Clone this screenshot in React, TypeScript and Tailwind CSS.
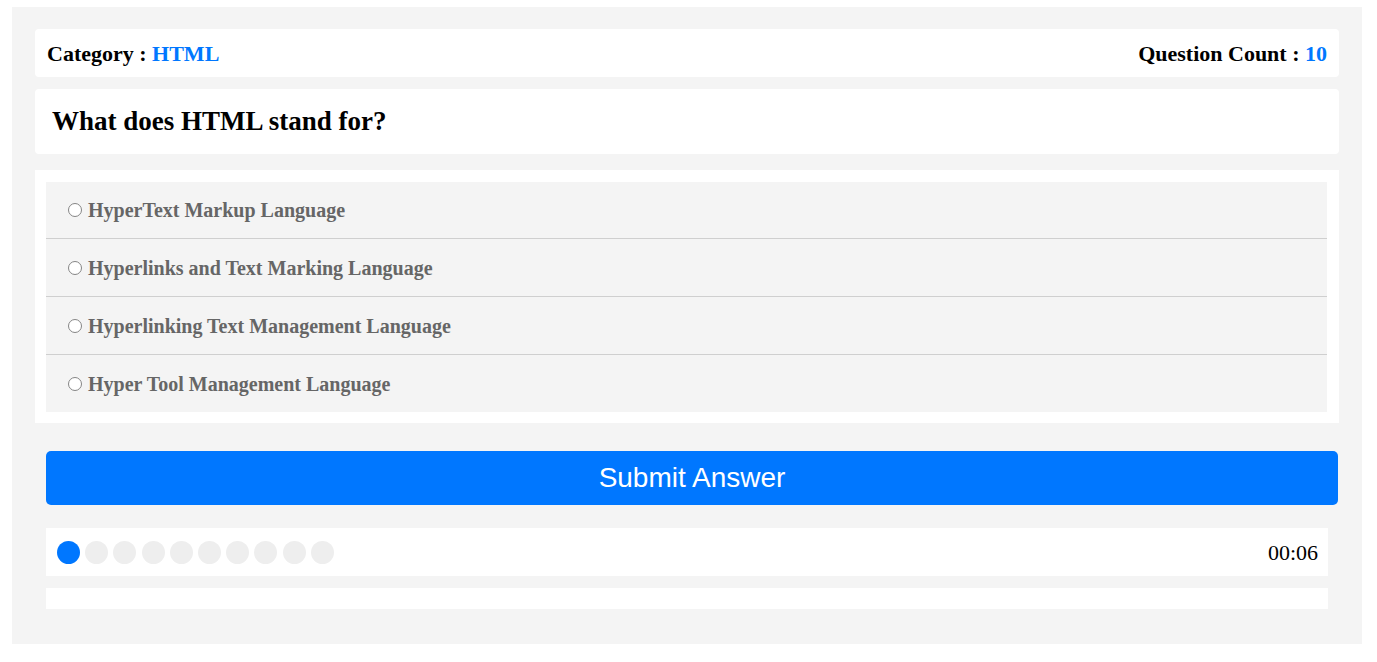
const options = [
  "HyperText Markup Language",
  "Hyperlinks and Text Marking Language",
  "Hyperlinking Text Management Language",
  "Hyper Tool Management Language",
];

const App = () => {
  const total = 10;
  const current = 0;

  return (
    <div className="min-h-[662px] bg-white pt-[7px] font-['Liberation_Serif',serif]">
      <div className="ml-[12px] w-[1350px] bg-[#f4f4f4] px-[23px] pt-[22px] pb-[35px]">
        <div className="flex h-[48px] items-center justify-between rounded bg-white px-3 text-[22px] font-bold text-black">
          <div>
            Category : <span className="text-[#0077ff]">HTML</span>
          </div>
          <div>
            Question Count : <span className="text-[#0077ff]">{total}</span>
          </div>
        </div>

        <div className="mt-3 flex h-[65px] items-center rounded bg-white px-[17px]">
          <h2 className="text-[27px] font-bold text-black">What does HTML stand for?</h2>
        </div>

        <div className="mt-4 bg-white pt-3 pb-[11px] pl-[11px] pr-[12px]">
          {options.map((opt, i) => (
            <label
              key={i}
              className={`flex cursor-pointer items-center gap-[6px] bg-[#f4f4f4] pl-[22px] ${
                i < options.length - 1 ? "border-b border-[#cfcfcf]" : ""
              } ${i === 0 || i === options.length - 1 ? "h-[57px]" : "h-[58px]"}`}
            >
              <span className="h-[14px] w-[14px] rounded-full border-[1.5px] border-[#858585] bg-white"></span>
              <span className="text-[20px] font-bold text-[#666666]">{opt}</span>
            </label>
          ))}
        </div>

        <button className="mt-[28px] ml-[11px] flex h-[54px] w-[1292px] items-center justify-center rounded-[5px] bg-[#0077ff] font-['Liberation_Sans',sans-serif] text-[28px] text-white">
          Submit Answer
        </button>

        <div className="mt-[23px] ml-[11px] mr-[11px] flex h-[48px] items-center justify-between bg-white pl-[11px] pr-[10px]">
          <div className="flex gap-[5.2px]">
            {Array.from({ length: total }).map((_, i) => (
              <span
                key={i}
                className={`h-[23px] w-[23px] rounded-full ${i === current ? "bg-[#0077ff]" : "bg-[#eeeeee]"}`}
              ></span>
            ))}
          </div>
          <span className="text-[22px] text-black">00:06</span>
        </div>

        <div className="mt-3 ml-[11px] mr-[11px] h-[21px] bg-white"></div>
      </div>
    </div>
  );
};

export default App;
